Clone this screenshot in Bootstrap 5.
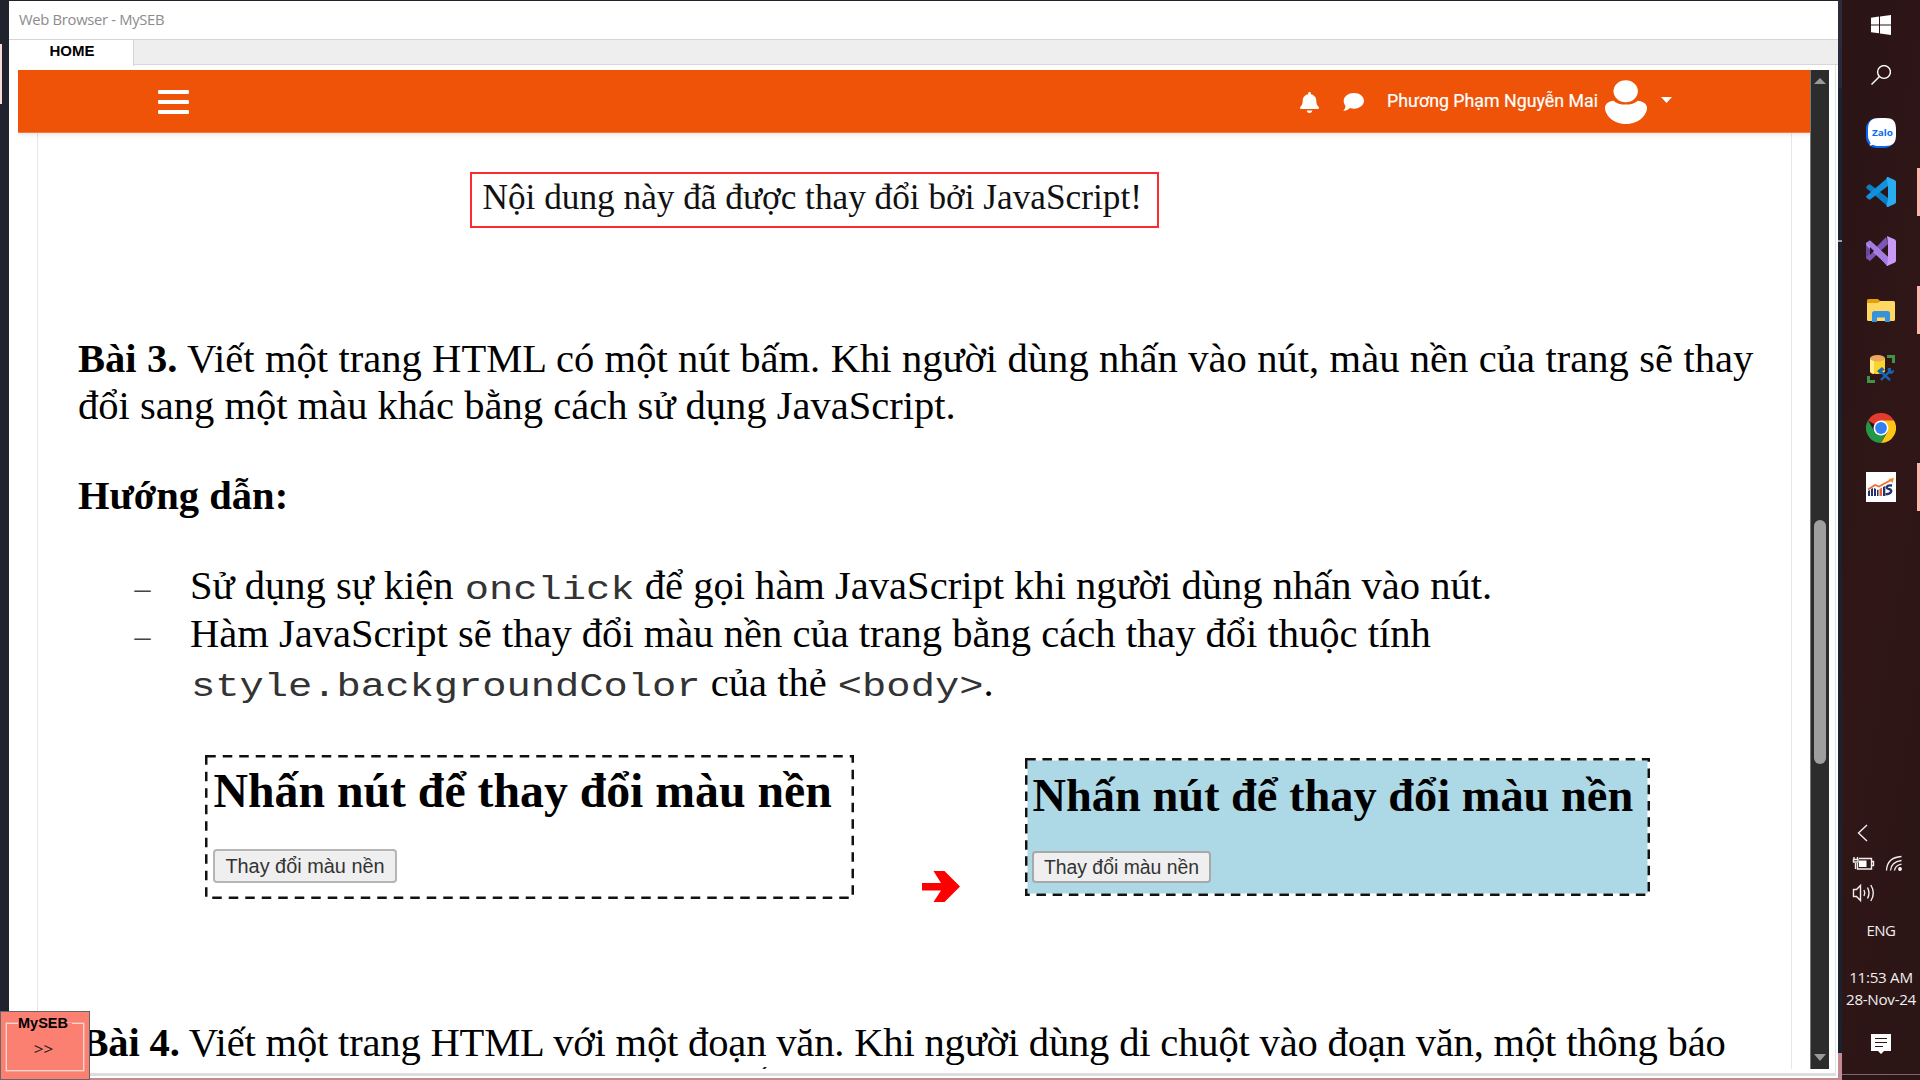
<!DOCTYPE html>
<html lang="vi">
<head>
<meta charset="utf-8">
<meta name="viewport" content="width=device-width, initial-scale=1">
<title>Web Browser - MySEB</title>
<link href="https://cdn.jsdelivr.net/npm/bootstrap@5.3.0/dist/css/bootstrap.min.css" rel="stylesheet">
<style>
  body{width:1920px;height:1080px;overflow:hidden;background:#20222e;color:#000;font-family:"Open Sans",sans-serif}
  svg{display:block;flex:none}
  .edge-left{width:9px}
  .edge-mark{width:2px;height:60px;margin-top:44px;background:#fbd9da}
  .edge-right{width:4px;background:linear-gradient(#2b2b3c 0 44px,#272a3c 44px 88px,#1b212e 88px)}
  .edge-right .tick{height:2px;margin-top:240px;background:#a99aa2}
  .edge-right .foot{height:27px;background:#c48b94}
  .win{width:1829px;margin-top:1px;height:1079px;background:#fff;border-bottom:2px solid #c08a90}
  .titlebar{height:38px;padding:0 0 1px 10px;font-size:14.8px;letter-spacing:-.32px;color:#8c8c8c}
  .tabs{height:26px;background:#eee;border-top:1px solid #d5d5d5;border-bottom:1px solid #d8d8d8}
  .tab-home{width:125px;height:26px;background:#fff;border-right:1px solid #d5d5d5;padding-left:40.5px;font:bold 15px/22px "Liberation Sans",sans-serif}
  .frame{height:1011px;padding:5px 5px 6px 9px;border-right:1px solid #e2e2e2;border-bottom:3px solid #dcdcdc;margin-right:2px}
  .topnav{height:63px;background:#ee5307;border-bottom:1px solid #f47a3c;box-shadow:0 2px 4px rgba(0,0,0,.09);position:relative;z-index:1;color:#fff;padding:2px 138px 0 140px}
  .topnav .user{font:17.8px/24px Roboto,sans-serif;-webkit-text-stroke:.2px #fff;margin:-3px 6.5px 0 23px}
  .topnav .chat{margin-left:24px}
  .topnav .caret{margin:-5px 0 0 14.5px}
  .view{width:1792px;height:999px;overflow:hidden;position:relative}
  .scroller{width:19px;height:999px;background:#2c2c2c;border-left:1px solid #777;position:relative}
  .scroller .up{margin:8px 0 0 3px}
  .scroller .down{margin:970px 0 0 3px}
  .thumb{width:12px;height:244px;border-radius:6px;background:#9f9f9f;position:absolute;left:3px;top:450px}
  .doc{width:1755px;height:980px;margin-left:19px;border:solid #e6e6e6;border-width:0 1px;font:40.55px/47px "Liberation Serif",serif;padding-left:40px;position:relative;white-space:nowrap}
  .changed{margin:39px 0 1px 392px;width:689px;height:56px;border:2px solid #ff2a2a;padding:1px 0 0 10.5px;font-size:35.25px;line-height:46px;color:#111}
  .task{margin-top:105.5px}
  .task .first-line{word-spacing:.28px}
  .hint{margin-top:43.5px}
  .steps{margin-top:42.5px;height:146px;line-height:48.5px;padding-left:56.5px}
  .steps i{font-style:normal;font-size:32px;line-height:1;width:55.5px;flex:none;color:#444}
  .steps code{display:inline-block;margin-left:1px;font:40.45px/1 "Liberation Mono",monospace;color:#333;transform:scaleY(.84);transform-origin:0 76.6%}
  .shots{margin-top:47.5px;padding-left:126.5px;height:144px}
  .shot{position:relative;padding-left:8.5px}
  .shot>svg{position:absolute;left:0;top:0}
  .shot h2{font:bold 47.75px/52.7px "Liberation Serif",serif;margin:0 0 0 .5px}
  .shot h2,.demo-btn{position:relative}
  .shot-a{width:649px;height:144px;padding-top:10px}
  .shot-b{width:625px;height:138px;margin-top:3px;padding-top:11.5px;padding-left:7.5px;background:#add8e6;margin-left:65px}
  .shot-b h2{font-size:46.4px;line-height:51.3px}
  .demo-btn{display:flex;align-items:center;justify-content:center;border:2px solid #b5b5b5;border-radius:4px;background:#efefef;color:#333;font:19.9px/24px "Liberation Sans",sans-serif;padding:0}
  .shot-a .demo-btn{width:184px;height:33.5px;margin-top:31.3px}
  .shot-b .demo-btn{width:179px;height:31.5px;margin-top:30.5px;font-size:19.4px;border-color:#a8a8a8}
  .arrow{margin:116px 0 0 68px}
  .next-task{margin:119.5px 0 0 3.5px;letter-spacing:-.17px}
  .tip{position:absolute;left:723px;top:934px}
  .seb{position:absolute;left:0;top:1011px;width:90px;height:69px;background:#fb8072;border:1px solid #666;z-index:5}
  .seb fieldset{border:1px solid #f5d5d0;box-shadow:0 0 0 .4px #f5d5d0;width:78px;height:56px;margin:3px 0 0 5px;padding:0;text-align:center;color:#222}
  .seb legend{float:none;width:auto;margin:0 auto;padding:0 2px;font:bold 14.5px/17px "Liberation Sans",sans-serif;color:#000;position:relative;left:-2px}
  .seb span{display:block;margin:8px 3px 0 0;font:17px/18px "Open Sans",sans-serif}
  .taskbar{width:78px;height:1080px;background:linear-gradient(100deg,#2a1416,#301617 50%,#2b1515);color:#eee;font-size:15px}
  .slot{height:59px;width:78px}
  .slot.sys{height:50px}
  .slot.find{margin-bottom:3.5px}
  .slot.open{background:linear-gradient(#fdb6ad,#fdb6ad) right center/3px 48px no-repeat}
  .tray{margin-top:302px}
  .lang{margin-top:10.5px;line-height:22px;font-size:15px;letter-spacing:-.5px}
  .clock{margin-top:25px;font-size:15.2px;line-height:22px;letter-spacing:-.3px}
  .note{margin:23.5px 0 0 29px}
  .deskline{height:1px;background:#79686a;margin-top:20px;width:78px}
</style>
<script src="https://cdn.jsdelivr.net/npm/bootstrap@5.3.0/dist/js/bootstrap.bundle.min.js"></script>
</head>
<body class="d-flex align-items-start m-0 position-relative">
<div class="edge-left flex-shrink-0"><div class="edge-mark"></div></div>

<main class="win flex-shrink-0">
  <header class="titlebar d-flex align-items-center">Web Browser - MySEB</header>
  <div class="tabs"><div class="tab-home">HOME</div></div>
  <div class="frame d-flex">
    <div class="view flex-shrink-0">
      <nav class="topnav d-flex align-items-center">
        <svg class="me-auto" width="31" height="24" viewBox="0 0 31 24" fill="#fff"><rect width="31" height="4" rx="1.2"/><rect y="10" width="31" height="4" rx="1.2"/><rect y="20" width="31" height="4" rx="1.2"/></svg>
        <svg width="19" height="21" viewBox="0 0 448 512" preserveAspectRatio="none" fill="#fff"><path d="M224 512c35.320 0 63.970-28.650 63.970-64H160.030c0 35.350 28.650 64 63.970 64zm215.390-149.710c-19.320-20.760-55.470-51.990-55.470-154.290 0-77.700-54.480-139.900-127.940-155.160V32c0-17.670-14.320-32-31.980-32s-31.980 14.330-31.980 32v20.840C118.560 68.100 64.080 130.300 64.080 208c0 102.300-36.150 133.530-55.470 154.290-6 6.450-8.660 14.160-8.610 21.710.11 16.400 12.980 32 32.100 32h383.800c19.120 0 32-15.600 32.100-32 .05-7.550-2.610-15.270-8.610-21.710z"/></svg>
        <svg class="chat" width="21" height="18" viewBox="0 0 21 18" fill="#fff"><path d="M11 0c5.600 0 10 3.400 10 7.800s-4.400 7.900-10 7.900c-1.500 0-2.900-.2-4.100-.6C5.500 16.500 3.300 17.800.8 18c-.3 0-.4-.3-.2-.5 1.100-1.400 1.700-2.600 1.900-4.500C1.300 11.600.7 9.800.7 7.800.7 3.400 5.400 0 11 0z"/></svg>
        <span class="user">Phương Phạm Nguyễn Mai</span>
        <svg width="42" height="44" viewBox="0 0 42 44" fill="#fff"><ellipse cx="20.700" cy="11.200" rx="12.200" ry="11"/><path d="M8.500 20.700C11.500 23.200 15.500 24.600 20.500 24.600s9.500-1.400 12.300-3.900C38 21 42 24 42 28c0 6-7 16-21 16S0 34 0 28c0-4 3.500-7 8.500-7.300z"/></svg>
        <svg class="caret" width="11" height="6" viewBox="0 0 11 6"><path d="M0 0h11L5.500 6z" fill="#fff"/></svg>
      </nav>
      <article class="doc">
        <div class="d-flex"><div class="changed">Nội dung này đã được thay đổi bởi JavaScript!</div></div>
        <div class="task"><span class="first-line"><b>Bài 3.</b> Viết một trang HTML có một nút bấm. Khi người dùng nhấn vào nút, màu nền của trang sẽ thay</span><br>đổi sang một màu khác bằng cách sử dụng JavaScript.</div>
        <div class="hint"><b>Hướng dẫn:</b></div>
        <div class="steps">
          <div class="d-flex align-items-baseline"><i>–</i><div>Sử dụng sự kiện <code>onclick</code> để gọi hàm JavaScript khi người dùng nhấn vào nút.</div></div>
          <div class="d-flex align-items-baseline"><i>–</i><div>Hàm JavaScript sẽ thay đổi màu nền của trang bằng cách thay đổi thuộc tính<br><code>style.backgroundColor</code> của thẻ <code>&lt;body&gt;</code>.</div></div>
        </div>
        <div class="shots d-flex align-items-start">
          <div class="shot shot-a">
            <svg width="649" height="144"><rect x="1.250" y="1.250" width="646.500" height="141.500" fill="none" stroke="#111" stroke-width="2.500" stroke-dasharray="9.500 7"/></svg>
            <h2>Nhấn nút để thay đổi màu nền</h2>
            <button class="demo-btn" type="button">Thay đổi màu nền</button>
          </div>
          <svg class="arrow" width="38" height="31" viewBox="0 0 38 31"><path d="M0 12h19L11.500 0h11L38 15.500 22.500 31h-11L19 19.500H0z" fill="#f00"/></svg>
          <div class="shot shot-b">
            <svg width="625" height="138"><rect x="1.250" y="1.250" width="622.500" height="135.500" fill="none" stroke="#fff" stroke-width="2.500"/><rect x="1.250" y="1.250" width="622.500" height="135.500" fill="none" stroke="#111" stroke-width="2.500" stroke-dasharray="9.500 6.700"/></svg>
            <h2>Nhấn nút để thay đổi màu nền</h2>
            <button class="demo-btn" type="button">Thay đổi màu nền</button>
          </div>
        </div>
        <div class="next-task"><b>Bài 4.</b> Viết một trang HTML với một đoạn văn. Khi người dùng di chuột vào đoạn văn, một thông báo</div>
        <svg class="tip" width="6" height="4"><path d="M3 0h3L2 4H0z" fill="#222"/></svg>
      </article>
    </div>
    <div class="scroller flex-shrink-0">
      <svg class="up" width="12" height="6" viewBox="0 0 12 6"><path d="M6 0l6 6H0z" fill="#9a9a9a"/></svg>
      <div class="thumb"></div>
      <svg class="down" width="12" height="7" viewBox="0 0 12 7"><path d="M0 0h12L6 7z" fill="#9a9a9a"/></svg>
    </div>
  </div>
</main>
<div class="edge-right flex-shrink-0 d-flex flex-column align-self-stretch"><div class="tick"></div><div class="foot mt-auto"></div></div>

<aside class="taskbar flex-shrink-0 d-flex flex-column">
  <div class="slot sys d-flex align-items-center justify-content-center"><svg width="20" height="20" viewBox="0 0 20 20" fill="#fff"><path d="M0 2.800L8 1.600V9.400H0zM9 1.500L20 0v9.400H9zM0 10.400h8v7.900L0 17.200zM9 10.400h11V20L9 18.500z"/></svg></div>
  <div class="slot sys find d-flex align-items-center justify-content-center"><svg width="20" height="20" viewBox="0 0 20 20" fill="none" stroke="#fff" stroke-width="1.400"><circle cx="13" cy="7" r="6.400"/><path d="M8.500 11.500L.500 19.500"/></svg></div>
  <div class="slot d-flex align-items-center justify-content-center"><svg width="30" height="30" viewBox="0 0 30 30"><rect width="29" height="30" rx="11" fill="#0a66f5"/><path d="M14 0h5c8 0 11 3 11 11v6c0 8-3 11-11 11h-6c-2.500 0-4.500-.400-6-1.200-1 .700-2.500.900-3.800.600 1.200-.800 1.500-2 .900-3.400C2.700 22 2 20 2 17v-6C2 3 6 0 14 0z" fill="#fff"/><text x="6" y="17.500" font-family="Open Sans" font-size="9.500" font-weight="700" fill="#0a6cf5" textLength="21" lengthAdjust="spacingAndGlyphs">Zalo</text></svg></div>
  <div class="slot open d-flex align-items-center justify-content-center"><svg width="30" height="30" viewBox="0 0 30 30"><path d="M.5 9.500l2-1.800q1-.700 2 0L22 21v8.500L.800 11.600Q-.300 10.400.5 9.500z" fill="#0a7fc8"/><path d="M.5 20.500l2 1.800q1 .700 2 0L22 9V.500L.800 18.400Q-.300 19.600.5 20.500z" fill="#1390dc"/><path d="M22 0l7 3.300q1 .500 1 1.600v20.200q0 1.100-1 1.600L22 30q-1 .200-1.500-.8L22 22V8l-1.500-7Q21-.200 22 0z" fill="#2aabf2"/></svg></div>
  <div class="slot d-flex align-items-center justify-content-center"><svg width="30" height="30" viewBox="0 0 30 30"><path d="M0 7l4-2v20l-4-3z" fill="#68479f"/><path d="M0 22L20 1l2 7L4 25z" fill="#7c55b8"/><path d="M0 7l4-2.500L22 21v9L.800 10z" fill="#b18be8"/><path d="M4 4.500L22 21v9h-1L1 7z" fill="#a67be0"/><path d="M21 0l8 3.500 1 1.500v20l-1 1.500L21 30l1-8V8z" fill="#c99bf5"/><path d="M4 11v8l4-4z" fill="#2c1517"/></svg></div>
  <div class="slot open d-flex align-items-center justify-content-center"><svg width="28" height="23" viewBox="0 0 28 23"><path d="M0 1.500Q0 0 1.500 0H11l2 2-1 3H0z" fill="#e59f08"/><path d="M0 4h11l2-2h13.500Q28 2 28 3.500v17q0 1.500-1.500 1.500h-25Q0 22 0 20.500z" fill="#ffd765"/><path d="M5 23v-8.500Q5 12 7.500 12h13q2.500 0 2.500 2.500V23h-5v-4.500h-8V23z" fill="#3592db"/></svg></div>
  <div class="slot d-flex align-items-center justify-content-center"><svg width="28" height="28" viewBox="0 0 28 28"><path d="M3 3v13c0 4 15 4 15 0V3z" fill="#f9d52b"/><path d="M3 3v13c0 2 2 2.800 4 3V4z" fill="#fff08a"/><ellipse cx="10.500" cy="3.200" rx="7.500" ry="3.200" fill="#eda65b"/><path d="M20 1.500h6.500V8M1.500 21v5.500H8" fill="none" stroke="#3f9443" stroke-width="3"/><path d="M14 25l9-9M13 16l10 9" stroke="#1565b5" stroke-width="2.400" fill="none"/><path d="M10 16l5-4 3 3-3 1-2 3zM21 13l3 0 0 3 3-1q0 4-4 4l-2-2q-1-3 0-4z" fill="#1565b5"/></svg></div>
  <div class="slot d-flex align-items-center justify-content-center"><svg width="30" height="30" viewBox="0 0 30 30"><path d="M15 15L2 7.500A15 15 0 0 1 28 7.500z" fill="#e33b2e"/><path d="M15 7.500h13A15 15 0 0 1 15 30l6.500-11.300z" fill="#fdc516"/><path d="M2 7.500A15 15 0 0 0 15 30l6.500-11.200L15 15 8.500 18.700z" fill="#259847"/><circle cx="15" cy="15" r="7.500" fill="#fff"/><circle cx="15" cy="15" r="5.900" fill="#347ff0"/></svg></div>
  <div class="slot open d-flex align-items-center justify-content-center"><svg width="30" height="30" viewBox="0 0 30 30"><path fill="#fff" d="M0 0h30v30H0z"/><path d="M2 24v-5l2-1v6zM5 24v-7l2-1v8zM8 24v-8l2 1v7zM11 24v-6l1.500-.5V24zM17 24v-9l2.300-1v10z" fill="#24336e"/><path d="M13.500 24v-7l2.500-1.500V24z" fill="#e9602c"/><path d="M26 13.500c-6-.8-7 3-2.500 3.800 3.500.7 1.500 5-4 5" fill="none" stroke="#24336e" stroke-width="2.400"/><path d="M2 17.500l7-4.500 4 1.500L25 8" fill="none" stroke="#ef6c33" stroke-width="1.600"/><path d="M22.500 7L28 6 26.500 11z" fill="#f28a2f"/></svg></div>

  <div class="tray d-flex flex-column">
    <svg width="78" height="90" viewBox="0 0 78 90" fill="none" stroke="#f2eeee" stroke-width="1.400">
      <path d="M25 6l-8.500 8L25 22"/>
      <path d="M17 39.500h12.500V50H15.500v-6"/><path d="M30 42.500h1.500v4H30M13.500 50v-6M12 38v2.500M15.500 38v2.500M11.500 40.500h4.500v2.500h-4.500z"/><path d="M17 41.500h7.500v6.500H17z" fill="#fff" stroke="none"/>
      <g stroke-width="1.300"><path d="M44.500 51.500Q45 38.500 59.500 37.500M48.500 51.500q.500-8.500 11-10M52.500 51.500q.500-5 7-6.300"/></g><circle cx="58" cy="50" r="1.900" fill="#fff" stroke="none"/>
      <path d="M11.500 70.500h3l4-4v15l-4-4h-3z"/><path d="M22 71q1.500 3 0 6M25.500 68.500q3 5.500 0 11M28.800 66q5 8 0 16"/>
    </svg>
    <div class="lang text-center">ENG</div>
    <div class="clock text-center">11:53 AM<br>28-Nov-24</div>
    <svg class="note" width="20" height="20" viewBox="0 0 20 20"><path d="M0 0h20v17h-7l-3 3-3-3H0z" fill="#fff"/><path d="M4 4.500h12M4 8.500h12M4 12.500h8" stroke="#2c1517" stroke-width="1.200"/></svg>
    <div class="deskline"></div>
  </div>
</aside>

<div class="seb"><fieldset><legend>MySEB</legend><span>&gt;&gt;</span></fieldset></div>
</body>
</html>
